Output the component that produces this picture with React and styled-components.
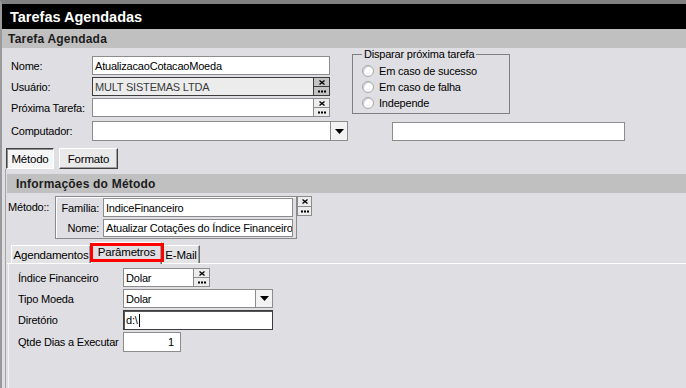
import React from 'react';
import styled, { createGlobalStyle } from 'styled-components';

const GlobalStyle = createGlobalStyle`
  html, body {
    margin: 0;
    padding: 0;
    background: #dfdee3;
  }
  body {
    font-family: "Liberation Sans", Arial, sans-serif;
    font-size: 11px;
    letter-spacing: -0.2px;
    color: #000;
  }
`;

const Window = styled.div`
  width: 686px;
  height: 388px;
  box-sizing: border-box;
  overflow: hidden;
  border-top: 4px solid #808080;
  border-left: 2px solid #9a9a9a;
  background: #dfdee3;
  display: flex;
  flex-direction: column;
`;

const TitleBar = styled.div`
  height: 25px;
  flex-shrink: 0;
  background: #000;
  color: #fff;
  font-weight: bold;
  font-size: 14.5px;
  letter-spacing: 0;
  display: flex;
  align-items: center;
  padding-left: 8px;
`;

const SectionHeader = styled.div`
  height: 19px;
  flex-shrink: 0;
  background: #c0c0c0;
  color: #1c1c1c;
  font-weight: bold;
  font-size: 12px;
  letter-spacing: 0.2px;
  display: flex;
  align-items: center;
  padding-left: ${({ $pl }) => $pl || 6}px;
`;

const TopForm = styled.div`
  display: flex;
  align-items: flex-start;
  padding: 6px 0 0 9px;
`;

const LeftCol = styled.div`
  display: flex;
  flex-direction: column;
  gap: 2px;
  padding-top: 2px;
`;

const Row = styled.div`
  display: flex;
  align-items: center;
  height: ${({ $h }) => $h || 19}px;
  margin-top: ${({ $mt }) => $mt || 0}px;
`;

const IndentRow = styled(Row)`
  padding-left: 9px;
`;

const Label = styled.div`
  width: ${({ $w }) => $w}px;
  flex-shrink: 0;
  white-space: nowrap;
  text-align: ${({ $right }) => ($right ? 'right' : 'left')};
  padding-right: ${({ $right }) => ($right ? 3 : 0)}px;
  box-sizing: border-box;
`;

const Field = styled.div`
  box-sizing: border-box;
  flex-shrink: 0;
  width: ${({ $w }) => $w}px;
  height: ${({ $h }) => $h || 19}px;
  border: 1px solid ${({ $dark }) => ($dark ? '#3c3c3c' : '#8c8c8c')};
  border-right-width: ${({ $joined }) => ($joined ? 0 : 1)}px;
  margin-left: ${({ $ml }) => $ml || 0}px;
  background: ${({ $disabled }) => ($disabled ? '#ececec' : '#fff')};
  color: ${({ $disabled }) => ($disabled ? '#3a3a3a' : '#000')};
  display: flex;
  align-items: center;
  justify-content: ${({ $right }) => ($right ? 'flex-end' : 'flex-start')};
  padding: 0 ${({ $right }) => ($right ? 6 : 2)}px;
  white-space: nowrap;
  overflow: hidden;
  box-shadow: ${({ $focus }) => ($focus ? 'inset 1px 1px 0 #555' : 'none')};
`;

const Caret = styled.span`
  display: inline-block;
  width: 1px;
  height: 13px;
  background: #000;
  margin-left: 1px;
`;

const Lookup = styled.div`
  display: flex;
  height: ${({ $h }) => $h || 19}px;
`;

const BtnStack = styled.div`
  display: flex;
  flex-direction: column;
  width: ${({ $w }) => $w || 17}px;
  height: 100%;
  box-sizing: border-box;
  border: 1px solid ${({ $dark }) => ($dark ? '#3c3c3c' : '#8c8c8c')};
  border-left: none;
`;

const MiniBtn = styled.div`
  flex: 1;
  background: ${({ $dark }) => ($dark ? '#c4c4c4' : '#ececec')};
  border-left: 1px solid ${({ $dark }) => ($dark ? '#3c3c3c' : '#8c8c8c')};
  border-top: ${({ $second, $dark }) => ($second ? `1px solid ${$dark ? '#3c3c3c' : '#8c8c8c'}` : 'none')};
  display: flex;
  align-items: center;
  justify-content: center;
  overflow: hidden;
`;

const Select = styled.div`
  box-sizing: border-box;
  width: ${({ $w }) => $w}px;
  height: ${({ $h }) => $h || 19}px;
  border: 1px solid #8c8c8c;
  background: #fff;
  display: flex;
  align-items: stretch;
`;

const SelectText = styled.div`
  flex: 1;
  display: flex;
  align-items: center;
  padding-left: 2px;
  white-space: nowrap;
`;

const ArrowBtn = styled.div`
  width: 16px;
  border-left: 1px solid #8c8c8c;
  background: #f2f2f2;
  display: flex;
  align-items: center;
  justify-content: center;
`;

const GroupBox = styled.div`
  position: relative;
  box-sizing: border-box;
  width: 158px;
  height: 60px;
  margin-left: 22px;
  border: 1px solid #808080;
  padding: 8px 0 0 9px;
  display: flex;
  flex-direction: column;
  gap: 1px;
`;

const Legend = styled.span`
  position: absolute;
  top: -7px;
  left: 9px;
  padding: 0 2px;
  background: #dfdee3;
  line-height: 13px;
  white-space: nowrap;
`;

const RadioRow = styled.label`
  display: flex;
  align-items: center;
  gap: 5px;
  height: 15px;
`;

const RadioDot = styled.span`
  width: 12px;
  height: 12px;
  box-sizing: border-box;
  border-radius: 50%;
  border: 1px solid #a8a8a8;
  background: radial-gradient(circle at 60% 60%, #fff 40%, #e6e6e6 100%);
  box-shadow: inset 1px 1px 0 #d0d0d0;
`;

const TabRow = styled.div`
  display: flex;
  gap: 5px;
  padding-left: 4px;
  margin-top: 7px;
  height: 21px;
  flex-shrink: 0;
`;

const PageTab = styled.div`
  box-sizing: border-box;
  width: ${({ $w }) => $w}px;
  height: 21px;
  display: flex;
  align-items: center;
  justify-content: center;
  font-size: 11.5px;
  background: ${({ $active }) => ($active ? '#f6f6f6' : '#e9e9ea')};
  border: 1px solid;
  border-color: ${({ $active }) =>
    $active ? '#404040 #ffffff #ffffff #404040' : '#ffffff #404040 #404040 #ffffff'};
  box-shadow: ${({ $active }) =>
    $active ? 'inset 1px 1px 0 #909090' : 'inset -1px -1px 0 #a0a0a0'};
`;

const MethodPanel = styled.div`
  flex: 1;
  margin-left: 3px;
  border-left: 1px solid #a4a4a4;
  padding: 5px 0 0 1px;
  display: flex;
  flex-direction: column;
`;

const MethodRow = styled.div`
  display: flex;
  align-items: flex-start;
  margin-top: 3px;
  padding-left: 1px;
`;

const MethodLabel = styled.div`
  width: 47px;
  padding-top: 5px;
  white-space: nowrap;
`;

const MethodBox = styled.div`
  box-sizing: border-box;
  width: 242px;
  height: 43px;
  border: 1px solid #8a8a8a;
  box-shadow: inset 1px 1px 0 #fff;
  padding: 1px 0 0 0;
  display: grid;
  grid-template-columns: 46px 190px;
  grid-template-rows: 19px 18px;
  column-gap: 1px;
  row-gap: 2px;
  align-items: center;
`;

const MethodBtns = styled.div`
  display: flex;
  flex-direction: column;
  width: 15px;
  height: 20px;
`;

const SmallBtn = styled.div`
  flex: 1;
  box-sizing: border-box;
  border: 1px solid #8c8c8c;
  border-top-width: ${({ $second }) => ($second ? 0 : 1)}px;
  background: #ececec;
  display: flex;
  align-items: center;
  justify-content: center;
`;

const SubTabStrip = styled.div`
  display: flex;
  align-items: flex-end;
  height: 22px;
  margin-top: 2px;
  padding-left: 4px;
  border-bottom: 1px solid #fff;
  flex-shrink: 0;
`;

const SubTab = styled.div`
  position: relative;
  box-sizing: border-box;
  width: ${({ $w }) => $w}px;
  height: ${({ $active }) => ($active ? 22 : 18)}px;
  margin-bottom: ${({ $active }) => ($active ? -1 : 0)}px;
  padding-bottom: ${({ $active }) => ($active ? 3 : 0)}px;
  font-size: 11.5px;
  background: ${({ $active }) => ($active ? '#dfdee3' : '#e4e4e6')};
  border-top: 1px solid #fff;
  border-left: 1px solid #fff;
  border-right: 1px solid #6a6a6a;
  box-shadow: inset -1px 0 0 #a0a0a0;
  display: flex;
  align-items: center;
  justify-content: center;
  white-space: nowrap;
  z-index: ${({ $active }) => ($active ? 1 : 0)};
`;

const Highlight = styled.div`
  position: absolute;
  top: 0;
  left: -2px;
  right: -3px;
  height: 19px;
  border: 3px solid #f00;
  box-sizing: border-box;
  pointer-events: none;
`;

const ParamPanel = styled.div`
  flex: 1;
  margin-left: 1px;
  border-left: 1px solid #f4f4f4;
  padding: 4px 0 0 9px;
  display: flex;
  flex-direction: column;
  gap: 2px;
`;

const Arrow = () => (
  <svg width="9" height="5" viewBox="0 0 9 5">
    <polygon points="0,0 9,0 4.5,5" fill="#000" />
  </svg>
);

const ClearIcon = () => (
  <svg width="6" height="5" viewBox="0 0 6 5">
    <path d="M0.5 0.5 L5.5 4.5 M5.5 0.5 L0.5 4.5" stroke="#000" strokeWidth="1.3" />
  </svg>
);

const DotsIcon = () => (
  <svg width="8" height="4" viewBox="0 0 8 4">
    <rect x="0" y="1.5" width="2" height="2" fill="#000" />
    <rect x="3" y="1.5" width="2" height="2" fill="#000" />
    <rect x="6" y="1.5" width="2" height="2" fill="#000" />
  </svg>
);

const Btns = ({ dark }) => (
  <BtnStack $dark={dark}>
    <MiniBtn $dark={dark}><ClearIcon /></MiniBtn>
    <MiniBtn $dark={dark} $second><DotsIcon /></MiniBtn>
  </BtnStack>
);

const App = () => {
  return (
    <Window>
      <GlobalStyle />
      <TitleBar>Tarefas Agendadas</TitleBar>
      <SectionHeader>Tarefa Agendada</SectionHeader>

      <TopForm>
        <LeftCol>
          <Row>
            <Label $w={81}>Nome:</Label>
            <Field $w={238}>AtualizacaoCotacaoMoeda</Field>
          </Row>
          <Row>
            <Label $w={81}>Usuário:</Label>
            <Lookup>
              <Field $w={221} $dark $disabled $joined>MULT SISTEMAS LTDA</Field>
              <Btns dark />
            </Lookup>
          </Row>
          <Row>
            <Label $w={81}>Próxima Tarefa:</Label>
            <Lookup>
              <Field $w={221} $joined />
              <Btns />
            </Lookup>
          </Row>
        </LeftCol>

        <GroupBox>
          <Legend>Disparar próxima tarefa</Legend>
          <RadioRow><RadioDot />Em caso de sucesso</RadioRow>
          <RadioRow><RadioDot />Em caso de falha</RadioRow>
          <RadioRow><RadioDot />Independe</RadioRow>
        </GroupBox>
      </TopForm>

      <IndentRow $h={20} $mt={4}>
        <Label $w={81}>Computador:</Label>
        <Select $w={256} $h={20}>
          <SelectText />
          <ArrowBtn><Arrow /></ArrowBtn>
        </Select>
        <Field $w={233} $ml={44} />
      </IndentRow>

      <TabRow>
        <PageTab $w={48} $active>Método</PageTab>
        <PageTab $w={59}>Formato</PageTab>
      </TabRow>

      <MethodPanel>
        <SectionHeader $pl={9}>Informações do Método</SectionHeader>

        <MethodRow>
          <MethodLabel>Método::</MethodLabel>
          <MethodBox>
            <Label $w={46} $right>Família:</Label>
            <Field $w={190}>IndiceFinanceiro</Field>
            <Label $w={46} $right>Nome:</Label>
            <Field $w={190} $h={18}>Atualizar Cotações do Índice Financeiro</Field>
          </MethodBox>
          <MethodBtns>
            <SmallBtn><ClearIcon /></SmallBtn>
            <SmallBtn $second><DotsIcon /></SmallBtn>
          </MethodBtns>
        </MethodRow>

        <SubTabStrip>
          <SubTab $w={80}>Agendamentos</SubTab>
          <SubTab $w={71} $active>
            Parâmetros
            <Highlight />
          </SubTab>
          <SubTab $w={38}>E-Mail</SubTab>
        </SubTabStrip>

        <ParamPanel>
          <Row>
            <Label $w={105}>Índice Financeiro</Label>
            <Lookup>
              <Field $w={70} $joined>Dolar</Field>
              <Btns />
            </Lookup>
          </Row>
          <Row>
            <Label $w={105}>Tipo Moeda</Label>
            <Select $w={150}>
              <SelectText>Dolar</SelectText>
              <ArrowBtn><Arrow /></ArrowBtn>
            </Select>
          </Row>
          <Row $h={20}>
            <Label $w={105}>Diretório</Label>
            <Field $w={150} $h={20} $dark $focus>
              d:\<Caret />
            </Field>
          </Row>
          <Row $h={20}>
            <Label $w={105}>Qtde Dias a Executar</Label>
            <Field $w={58} $h={20} $right>1</Field>
          </Row>
        </ParamPanel>
      </MethodPanel>
    </Window>
  );
};

export default App;
